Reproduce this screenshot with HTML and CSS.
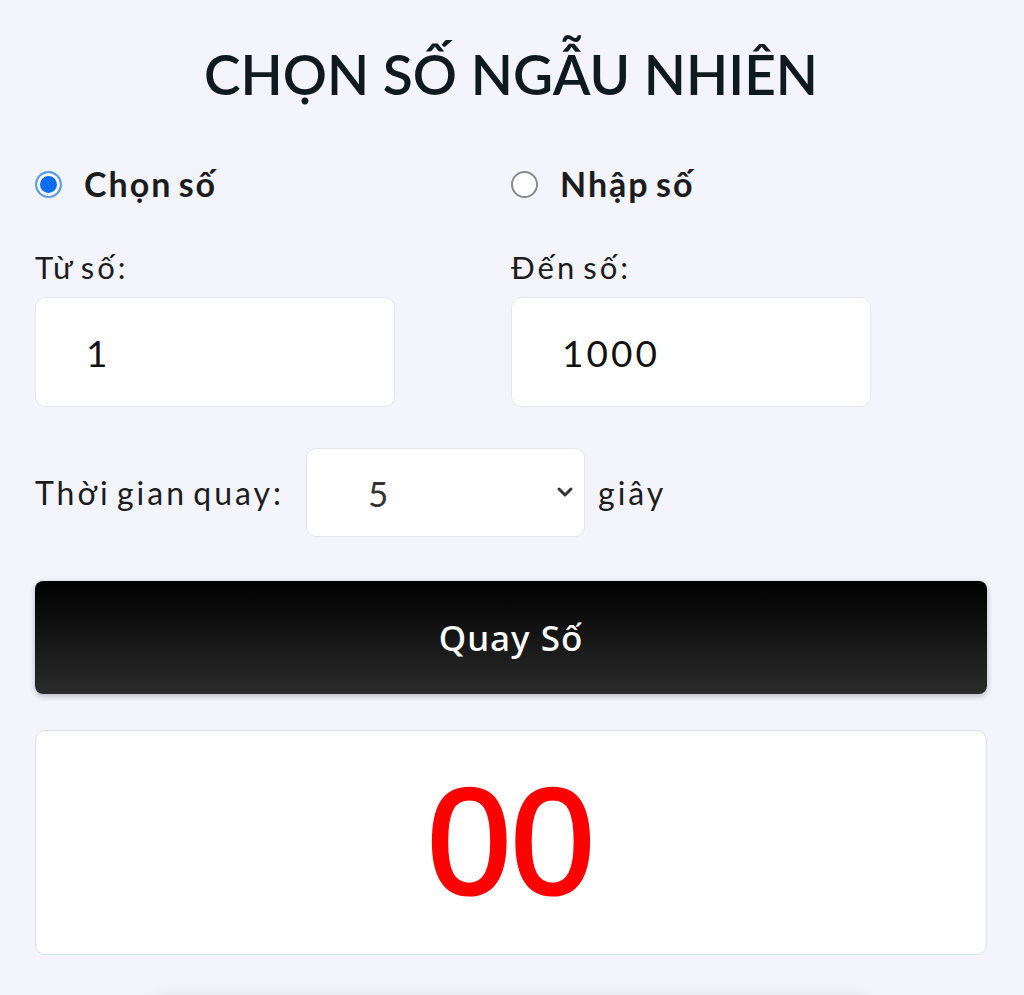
FILE: index.html
```html
<!DOCTYPE html>
<html lang="vi">
<head>
    <meta charset="UTF-8">
    <meta name="viewport" content="width=device-width, initial-scale=1.0">
    <title>Chọn số ngẫu nhiên</title>
    <link rel="stylesheet" href="styles.css">
</head>
<body>
    <div class="app">
        <h1 class="title">CHỌN SỐ NGẪU NHIÊN</h1>

        <div class="two-col mode-row">
            <label class="mode">
                <input type="radio" name="mode" class="radio" checked>
                <span>Chọn số</span>
            </label>
            <label class="mode">
                <input type="radio" name="mode" class="radio">
                <span>Nhập số</span>
            </label>
        </div>

        <div class="two-col range-row">
            <div class="field">
                <label for="fromNumber" class="field-label">Từ số:</label>
                <input id="fromNumber" class="num-input" type="text" value="1">
            </div>
            <div class="field">
                <label for="toNumber" class="field-label">Đến số:</label>
                <input id="toNumber" class="num-input" type="text" value="1000">
            </div>
        </div>

        <div class="time-row">
            <span class="time-label">Thời gian quay:</span>
            <div class="select-wrap">
                <select class="time-select">
                    <option>3</option>
                    <option selected>5</option>
                    <option>10</option>
                </select>
                <svg class="chevron" width="18" height="12" viewBox="0 0 18 12">
                    <path d="M3 3 L9 9 L15 3" fill="none" stroke="#333" stroke-width="3" stroke-linecap="round" stroke-linejoin="round"/>
                </svg>
            </div>
            <span class="time-unit">giây</span>
        </div>

        <button class="spin-button">Quay Số</button>

        <div class="result">00</div>

        <div class="footer-bar"></div>
    </div>
</body>
</html>
```

FILE: styles.css
```css
body {
    margin: 0;
    padding: 0;
    background: #f3f4fc;
    color: #1d1d1f;
    font-family: 'Lato', 'Noto Sans', sans-serif;
}

.app {
    padding: 0 37px 0 35px;
}

.title {
    margin: 0;
    padding-top: 41px;
    font-family: 'Lato', 'Noto Sans', sans-serif;
    font-size: 55px;
    font-weight: 600;
    line-height: 67px;
    text-align: center;
    color: #0f1a20;
}

/* two equal columns for radios and range inputs */
.two-col {
    display: grid;
    grid-template-columns: 1fr 1fr;
}

.mode-row {
    margin-top: 56px;
}

.mode {
    display: flex;
    align-items: center;
    gap: 22px;
    font-size: 34px;
    font-weight: 700;
    line-height: 40px;
    letter-spacing: 2px;
    word-spacing: -4px;
    color: #1c1c1c;
}

.radio {
    appearance: none;
    margin: 0;
    width: 27px;
    height: 27px;
    border: 2px solid #8a8a8a;
    border-radius: 50%;
    background: #fff;
    box-sizing: border-box;
}

.radio:checked {
    border-color: #5b9cf2;
    background: #0b6cf4;
    box-shadow: inset 0 0 0 3px #fff;
}

.range-row {
    margin-top: 45px;
}

.field {
    display: flex;
    flex-direction: column;
    gap: 12px;
}

.field-label {
    font-size: 31px;
    line-height: 36px;
    letter-spacing: 3px;
    word-spacing: -5px;
    color: #1c1c1c;
}

.num-input {
    width: 360px;
    height: 110px;
    box-sizing: border-box;
    padding: 0 0 0 50px;
    font-family: 'Lato', sans-serif;
    font-size: 37px;
    letter-spacing: 3px;
    color: #111;
    background: #fff;
    border: 1px solid #e5e7ee;
    border-radius: 10px;
    outline: none;
}

.time-row {
    display: flex;
    align-items: center;
    margin-top: 41px;
    font-size: 32px;
    letter-spacing: 3px;
    word-spacing: -5px;
    color: #1c1c1c;
}

.time-label {
    margin-right: 22px;
}

.select-wrap {
    position: relative;
}

.time-select {
    appearance: none;
    width: 279px;
    height: 89px;
    padding: 0 0 0 61px;
    font-family: 'Lato', sans-serif;
    font-size: 35px;
    color: #333;
    background: #fff;
    border: 1px solid #e5e7ee;
    border-radius: 10px;
    outline: none;
}

.chevron {
    position: absolute;
    right: 11px;
    top: 38px;
    pointer-events: none;
}

.time-unit {
    margin-left: 13px;
}

.spin-button {
    display: block;
    width: 100%;
    height: 113px;
    margin-top: 44px;
    font-family: 'Noto Sans', 'Open Sans', sans-serif;
    font-size: 35px;
    font-weight: 500;
    letter-spacing: 1px;
    color: #fff;
    background: linear-gradient(#000, #2b2b2b);
    border: none;
    border-radius: 8px;
    box-shadow: 0 2px 6px rgba(0, 0, 0, 0.25);
    cursor: pointer;
}

.result {
    height: 225px;
    margin-top: 36px;
    box-sizing: border-box;
    display: flex;
    justify-content: center;
    align-items: center;
    font-family: 'Liberation Sans', Arial, sans-serif;
    font-size: 150px;
    font-weight: 400;
    -webkit-text-stroke: 3px #ff0000;
    color: #ff0000;
    background: #fff;
    border: 1px solid #d4e6e0;
    border-radius: 10px;
}

.footer-bar {
    height: 60px;
    margin: 41px 120px 0 117px;
    background: #f3f4fc;
    box-shadow: 0 0 12px rgba(0, 0, 0, 0.08);
}
```
